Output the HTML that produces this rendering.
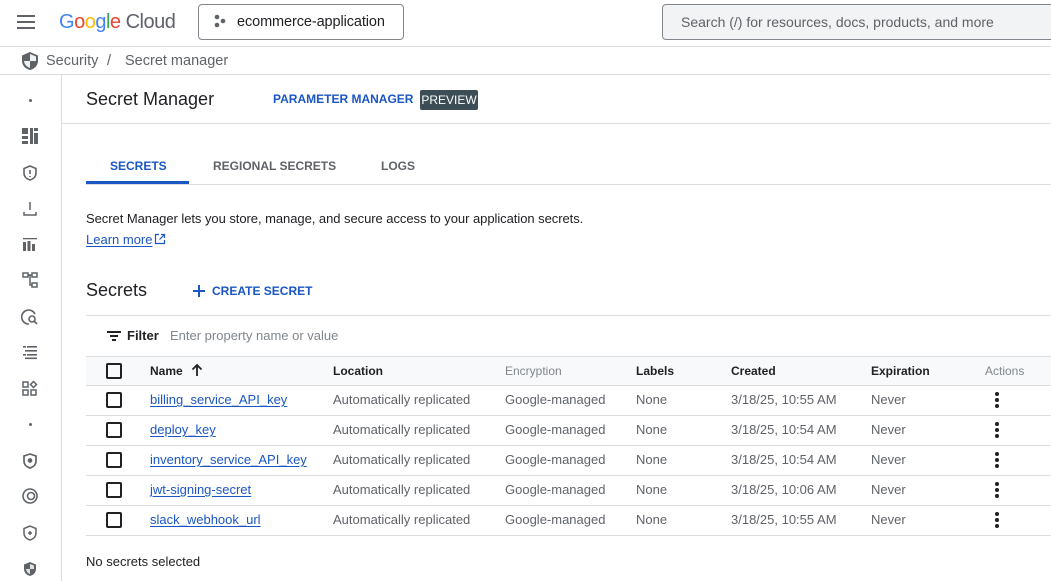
<!DOCTYPE html><html><head><meta charset="utf-8"><style>
*{margin:0;padding:0;box-sizing:border-box}
body{width:1051px;height:581px;overflow:hidden;background:#fff;font-family:"Liberation Sans",Arial,sans-serif;color:#202124;position:relative}
.a{position:absolute;white-space:nowrap}
.hl{position:absolute;height:1px;background:#dadce0}
.cb{position:absolute;width:16px;height:16px;border:2px solid #202124;border-radius:2px;left:106px}
.lnk{color:#1a56c4;text-decoration:underline;text-underline-offset:2px}
.c{font-size:13px;color:#5f6368}
.dots{position:absolute;left:995px;width:4px}
.dots i{display:block;width:4px;height:4px;border-radius:50%;background:#202124;margin-bottom:2px}
.si{position:absolute;left:21px;width:18px;height:18px}
</style></head><body>
<div class="a" style="left:17px;top:15px;width:18px;height:14px">
<div style="height:2px;background:#5f6368;margin-bottom:4px"></div><div style="height:2px;background:#5f6368;margin-bottom:4px"></div><div style="height:2px;background:#5f6368"></div></div>
<div class="a" style="left:59px;top:11px;font-size:20px;letter-spacing:-0.5px"><span style="color:#4285f4">G</span><span style="color:#ea4335">o</span><span style="color:#fbbc04">o</span><span style="color:#4285f4">g</span><span style="color:#34a853">l</span><span style="color:#ea4335">e</span><span style="color:#5f6368"> Cloud</span></div>
<div class="a" style="left:198px;top:4px;width:206px;height:36px;border:1px solid #80868b;border-radius:4px"></div>
<svg class="a" style="left:213px;top:14px" width="14" height="14" viewBox="0 0 14 14"><circle cx="4" cy="3" r="2.3" fill="#5f6368"/><circle cx="10" cy="7" r="2.3" fill="#5f6368"/><circle cx="4" cy="11" r="2.3" fill="#5f6368"/></svg>
<div class="a" style="left:237px;top:14px;font-size:14.5px;color:#202124;letter-spacing:-0.1px">ecommerce-application</div>
<div class="a" style="left:662px;top:4px;width:400px;height:36px;border:1px solid #80868b;border-radius:4px;background:#f1f3f4"></div>
<div class="a" style="left:681px;top:14px;font-size:14px;color:#5f6368">Search (/) for resources, docs, products, and more</div>
<div class="hl" style="left:0;top:46px;width:1051px"></div>
<svg class="a" style="left:21px;top:51px" width="18" height="20" viewBox="0 0 18 20"><path d="M9 1L1 4.5V10c0 4.5 3.5 8 8 9 4.5-1 8-4.5 8-9V4.5z" fill="#5f6368"/><path d="M9 3v7H3c.3 3.5 3 6 6 7V10h6V5.5z" fill="#fff" opacity=".9"/></svg>
<div class="a" style="left:46px;top:53px;font-size:14.5px;color:#5f6368">Security</div>
<div class="a" style="left:107px;top:53px;font-size:14.5px;color:#5f6368">/</div>
<div class="a" style="left:125px;top:53px;font-size:14.5px;color:#5f6368">Secret manager</div>
<div class="hl" style="left:0;top:74px;width:1051px"></div>
<div class="a" style="left:61px;top:75px;width:1px;height:506px;background:#dadce0"></div>
<div class="a" style="left:29px;top:99px;width:3px;height:3px;border-radius:50%;background:#5f6368"></div>
<svg class="si" style="top:127px" viewBox="0 0 18 18" fill="#5f6368"><rect x="1" y="1" width="6" height="6"/><rect x="1" y="9" width="6" height="3"/><rect x="1" y="14" width="6" height="3"/><rect x="9" y="1" width="3" height="16"/><rect x="13" y="1" width="4" height="3"/><rect x="13" y="6" width="4" height="11"/></svg>
<svg class="si" style="top:164px" viewBox="0 0 18 18" fill="none" stroke="#5f6368" stroke-width="1.6"><path d="M9 2L3 4.5V9c0 3.5 2.5 6 6 7 3.5-1 6-3.5 6-7V4.5z"/><path d="M9 6v4M9 12v1"/></svg>
<svg class="si" style="top:199px" viewBox="0 0 18 18" fill="none" stroke="#5f6368" stroke-width="1.5"><path d="M9 3v8M3 13v3h12v-3"/></svg>
<svg class="si" style="top:235px" viewBox="0 0 18 18" fill="#5f6368"><rect x="2" y="3" width="14" height="1.3"/><rect x="2" y="7" width="3" height="9"/><rect x="6.5" y="6" width="3" height="10"/><rect x="11" y="9" width="3" height="7"/></svg>
<svg class="si" style="top:271px" viewBox="0 0 18 18" fill="none" stroke="#5f6368" stroke-width="1.5"><rect x="2" y="2" width="5" height="4"/><rect x="11" y="2" width="5" height="4"/><rect x="11" y="12" width="5" height="4"/><path d="M7 4h4M9 4v10h2"/></svg>
<svg class="si" style="top:308px" viewBox="0 0 18 18" fill="none" stroke="#5f6368" stroke-width="1.6"><path d="M14 6A7 7 0 1 0 8 16"/><circle cx="11" cy="11" r="3"/><path d="M13 13l3 3"/></svg>
<svg class="si" style="top:343px" viewBox="0 0 18 18" fill="#5f6368"><rect x="2" y="3" width="3" height="1.6"/><rect x="6" y="3" width="10" height="1.6"/><rect x="4" y="7" width="12" height="1.6"/><rect x="2" y="11" width="3" height="1.6"/><rect x="6" y="11" width="10" height="1.6"/><rect x="4" y="14.5" width="12" height="1.6"/></svg>
<svg class="si" style="top:380px" viewBox="0 0 18 18" fill="none" stroke="#5f6368" stroke-width="1.5"><rect x="2" y="2" width="5" height="5"/><rect x="2" y="10" width="5" height="5"/><rect x="10" y="10" width="5" height="5"/><path d="M12.5 1.5l3 3-3 3-3-3z"/></svg>
<div class="a" style="left:29px;top:423px;width:3px;height:3px;border-radius:50%;background:#5f6368"></div>
<svg class="si" style="top:452px" viewBox="0 0 18 18" fill="none" stroke="#5f6368" stroke-width="1.7"><path d="M9 2L3 4V9c0 3.5 2.5 6 6 7 3.5-1 6-3.5 6-7V4z"/><circle cx="9" cy="8.5" r="1.5" fill="#5f6368"/></svg>
<svg class="si" style="top:487px" viewBox="0 0 18 18" fill="none" stroke="#5f6368" stroke-width="1.6"><circle cx="9" cy="9" r="7"/><circle cx="10" cy="9" r="3.5"/></svg>
<svg class="si" style="top:524px" viewBox="0 0 18 18" fill="none" stroke="#5f6368" stroke-width="1.5"><path d="M9 2L3 4.5V9c0 3.5 2.5 6 6 7 3.5-1 6-3.5 6-7V4.5z"/><path d="M9 7v4M7 9h4"/></svg>
<svg class="si" style="top:560px" viewBox="0 0 18 18"><path d="M9 2L3 4.5V9c0 3.5 2.5 6 6 7 3.5-1 6-3.5 6-7V4.5z" fill="#5f6368"/><path d="M9 4v5H5c.3 2.5 2 4.5 4 5V9h4V5.5z" fill="#fff" opacity=".8"/></svg>
<div class="a" style="left:86px;top:89px;font-size:18px">Secret Manager</div>
<div class="a" style="left:273px;top:92px;font-size:12px;font-weight:bold;color:#1a56c4">PARAMETER MANAGER</div>
<div class="a" style="left:420px;top:90px;width:58px;height:20px;background:#3c4d55;border-radius:2px;color:#fff;font-size:12px;line-height:20px;text-align:center">PREVIEW</div>
<div class="hl" style="left:62px;top:123px;width:989px"></div>
<div class="a" style="left:110px;top:159px;font-size:12px;font-weight:bold;color:#1a56c4">SECRETS</div>
<div class="a" style="left:213px;top:159px;font-size:12px;font-weight:bold;color:#5f6368">REGIONAL SECRETS</div>
<div class="a" style="left:381px;top:159px;font-size:12px;font-weight:bold;color:#5f6368">LOGS</div>
<div class="a" style="left:86px;top:181px;width:103px;height:3px;background:#1a56c4"></div>
<div class="hl" style="left:86px;top:184px;width:965px"></div>
<div class="a" style="left:86px;top:211px;font-size:13px;letter-spacing:-0.05px">Secret Manager lets you store, manage, and secure access to your application secrets.</div>
<div class="a lnk" style="left:86px;top:232px;font-size:13px">Learn more</div>
<svg class="a" style="left:154px;top:233px" width="12" height="12" viewBox="0 0 12 12" fill="none" stroke="#1a56c4" stroke-width="1.2"><path d="M5 1.5H1.5v9h9V7M7 1.5h3.5V5M10.5 1.5L5.5 6.5"/></svg>
<div class="a" style="left:86px;top:280px;font-size:18px">Secrets</div>
<svg class="a" style="left:192px;top:284px" width="14" height="14" viewBox="0 0 14 14" stroke="#1a56c4" stroke-width="2"><path d="M7 1v12M1 7h12"/></svg>
<div class="a" style="left:212px;top:284px;font-size:12px;font-weight:bold;color:#1a56c4">CREATE SECRET</div>
<div class="hl" style="left:86px;top:315px;width:965px"></div>
<svg class="a" style="left:107px;top:330px" width="14" height="12" viewBox="0 0 14 12" fill="#202124"><rect x="0" y="1" width="14" height="2"/><rect x="3" y="5" width="8" height="2"/><rect x="5" y="9" width="4" height="2"/></svg>
<div class="a" style="left:127px;top:328px;font-size:13px;font-weight:bold">Filter</div>
<div class="a" style="left:170px;top:328px;font-size:13px;color:#80868b">Enter property name or value</div>
<div class="a" style="left:86px;top:356px;width:965px;height:30px;background:#f8f9fa;border-top:1px solid #dadce0;border-bottom:1px solid #dadce0"></div>
<div class="cb" style="top:363px"></div>
<div class="a" style="left:150px;top:364px;font-size:12px;font-weight:bold">Name</div>
<svg class="a" style="left:191px;top:363px" width="12" height="14" viewBox="0 0 12 14" fill="none" stroke="#202124" stroke-width="1.8"><path d="M6 13V2M1.5 6.5L6 2l4.5 4.5"/></svg>
<div class="a" style="left:333px;top:364px;font-size:12px;font-weight:bold">Location</div>
<div class="a" style="left:505px;top:364px;font-size:12px;color:#80868b">Encryption</div>
<div class="a" style="left:636px;top:364px;font-size:12px;font-weight:bold">Labels</div>
<div class="a" style="left:731px;top:364px;font-size:12px;font-weight:bold">Created</div>
<div class="a" style="left:871px;top:364px;font-size:12px;font-weight:bold">Expiration</div>
<div class="a" style="left:985px;top:364px;font-size:12px;color:#80868b">Actions</div>

<div class="cb" style="top:392px"></div><div class="a lnk" style="left:150px;top:392px;font-size:13px">billing_service_API_key</div>
<div class="a c" style="left:333px;top:392px">Automatically replicated</div><div class="a c" style="left:505px;top:392px">Google-managed</div><div class="a c" style="left:636px;top:392px">None</div><div class="a c" style="left:731px;top:392px">3/18/25, 10:55 AM</div><div class="a c" style="left:871px;top:392px">Never</div>
<div class="dots" style="top:392px"><i></i><i></i><i></i></div>
<div class="hl" style="left:86px;top:415px;width:965px"></div>

<div class="cb" style="top:422px"></div><div class="a lnk" style="left:150px;top:422px;font-size:13px">deploy_key</div>
<div class="a c" style="left:333px;top:422px">Automatically replicated</div><div class="a c" style="left:505px;top:422px">Google-managed</div><div class="a c" style="left:636px;top:422px">None</div><div class="a c" style="left:731px;top:422px">3/18/25, 10:54 AM</div><div class="a c" style="left:871px;top:422px">Never</div>
<div class="dots" style="top:422px"><i></i><i></i><i></i></div>
<div class="hl" style="left:86px;top:445px;width:965px"></div>

<div class="cb" style="top:452px"></div><div class="a lnk" style="left:150px;top:452px;font-size:13px">inventory_service_API_key</div>
<div class="a c" style="left:333px;top:452px">Automatically replicated</div><div class="a c" style="left:505px;top:452px">Google-managed</div><div class="a c" style="left:636px;top:452px">None</div><div class="a c" style="left:731px;top:452px">3/18/25, 10:54 AM</div><div class="a c" style="left:871px;top:452px">Never</div>
<div class="dots" style="top:452px"><i></i><i></i><i></i></div>
<div class="hl" style="left:86px;top:475px;width:965px"></div>

<div class="cb" style="top:482px"></div><div class="a lnk" style="left:150px;top:482px;font-size:13px">jwt-signing-secret</div>
<div class="a c" style="left:333px;top:482px">Automatically replicated</div><div class="a c" style="left:505px;top:482px">Google-managed</div><div class="a c" style="left:636px;top:482px">None</div><div class="a c" style="left:731px;top:482px">3/18/25, 10:06 AM</div><div class="a c" style="left:871px;top:482px">Never</div>
<div class="dots" style="top:482px"><i></i><i></i><i></i></div>
<div class="hl" style="left:86px;top:505px;width:965px"></div>

<div class="cb" style="top:512px"></div><div class="a lnk" style="left:150px;top:512px;font-size:13px">slack_webhook_url</div>
<div class="a c" style="left:333px;top:512px">Automatically replicated</div><div class="a c" style="left:505px;top:512px">Google-managed</div><div class="a c" style="left:636px;top:512px">None</div><div class="a c" style="left:731px;top:512px">3/18/25, 10:55 AM</div><div class="a c" style="left:871px;top:512px">Never</div>
<div class="dots" style="top:512px"><i></i><i></i><i></i></div>
<div class="hl" style="left:86px;top:535px;width:965px"></div>

<div class="a" style="left:86px;top:554px;font-size:13px">No secrets selected</div>
</body></html>
